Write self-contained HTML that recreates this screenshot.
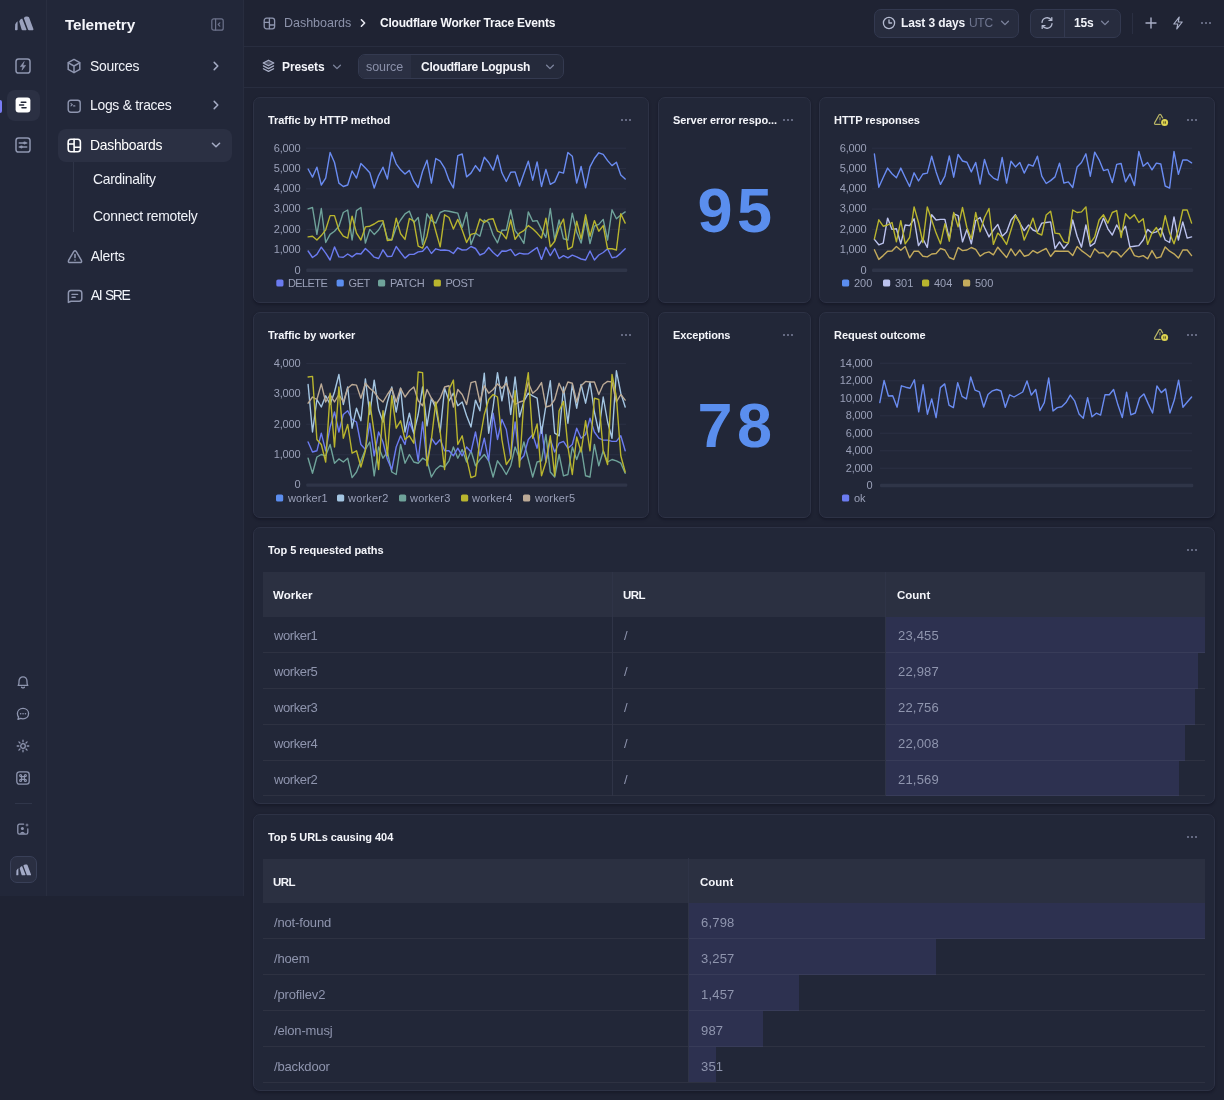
<!DOCTYPE html>
<html lang="en">
<head>
<meta charset="utf-8">
<title>Cloudflare Worker Trace Events</title>
<style>
*{box-sizing:border-box;margin:0;padding:0}
html,body{width:1224px;height:1100px;overflow:hidden}
body{background:#1f2333;font-family:"Liberation Sans",Arial,sans-serif;color:#ffffff;position:relative;-webkit-font-smoothing:antialiased}
#root{position:absolute;left:0;top:0;width:1224px;height:1100px;will-change:transform;transform:translateZ(0)}
.abs{position:absolute}
.sb{font-weight:700}
svg{display:block;overflow:visible}
.ico{position:absolute;fill:none;stroke:#8f96b0;stroke-width:1.5;stroke-linecap:round;stroke-linejoin:round}
/* rail + sidebar */
#rail{position:absolute;left:0;top:0;width:47px;height:896px;background:#222739;border-right:1px solid #292e40}
#side{position:absolute;left:47px;top:0;width:197px;height:896px;background:#222739;border-right:1px solid #282d3f}
.t{position:absolute;white-space:nowrap;line-height:1}
.nav{font-size:13.9px;color:#f1f3f9;letter-spacing:-.27px;margin-top:.8px}
/* top bars */
#top{position:absolute;left:244px;top:0;width:980px;height:47px;border-bottom:1px solid #282d3f}
#bar2{position:absolute;left:244px;top:47px;width:980px;height:41px;border-bottom:1px solid #282d3f}
.btn{position:absolute;background:#272c3e;border:1px solid #333950;border-radius:7px}
/* cards */
.card{position:absolute;background:#222738;border:1px solid #2d3245;border-radius:7px;box-shadow:0 1.5px 2.5px rgba(8,10,22,.32)}
.ct{position:absolute;font-size:11px;font-weight:700;color:#f4f5fa;white-space:nowrap;line-height:1;letter-spacing:-.05px;margin-top:1px}
.dots{position:absolute;width:10px;height:2px}
.dots i{position:absolute;top:-.1px;width:2.2px;height:2.2px;background:#7b819a;border-radius:50%}
.dots i:nth-child(1){left:1px}.dots i:nth-child(2){left:5.1px}.dots i:nth-child(3){left:9.2px}
.big{position:absolute;font-size:63px;font-weight:700;color:#5a8eee;line-height:1;white-space:nowrap;letter-spacing:4.5px}
.chart{position:absolute}
.tick{letter-spacing:-.15px;font-size:11px;fill:#9aa0b8;font-family:"Liberation Sans",Arial,sans-serif}
.leg{font-size:11px;fill:#9aa0b8;font-family:"Liberation Sans",Arial,sans-serif}
/* tables */
.th{position:absolute;background:#2b3041}
.thl{position:absolute;font-size:11.5px;font-weight:700;color:#f4f5fa;line-height:1;white-space:nowrap;letter-spacing:0;margin-top:.6px}
.td{position:absolute;font-size:13px;color:#8f95ae;line-height:1;white-space:nowrap;letter-spacing:-.15px;margin-top:-.3px}
.num{letter-spacing:.2px}
.wk{letter-spacing:-.4px}
.hl{position:absolute;height:1px;background:rgba(255,255,255,.055)}
.vl{position:absolute;width:1px;background:#2f3447}
.cbar{position:absolute;background:#2d3150}
</style>
</head>
<body>
<div id="root">

<!-- ============ ICON RAIL ============ -->
<div id="rail"></div>
<div id="side"></div>

<!-- rail: logo -->
<svg class="abs" style="left:13.5px;top:15.8px" width="20" height="15" viewBox="0 0 20 15">
  <g fill="#9aa1bd">
    <path d="M1.2 8.2 Q2.6 5.6 3.6 5.2 L3.6 13.4 Q3.6 14.2 2.8 14.2 L1.6 14.2 Q0.9 14.2 1 13.4 Z"/>
    <path d="M5.2 5.2 Q6.4 2.6 8.2 2.4 L12.4 13.2 Q12.8 14.2 11.8 14.2 L8.6 14.2 Q7.9 14.2 7.6 13.5 Z"/>
    <path d="M9.8 2 Q11 0.4 13 0.6 L14 0.7 Q14.8 0.8 15.1 1.6 L19.4 13.1 Q19.8 14.2 18.7 14.2 L15 14.2 Q14.3 14.2 14 13.5 Z"/>
  </g>
</svg>

<!-- rail: bolt in square -->
<svg class="ico" style="left:15px;top:58px" width="16" height="16" viewBox="0 0 16 16">
  <rect x="1" y="1" width="14" height="14" rx="2.6"/>
  <path d="M9 3.8 L5.4 8.6 H8 L7 12.2 L10.6 7.4 H8 Z" fill="#8f96b0" stroke-width="0.6"/>
</svg>

<!-- rail: active -->
<div class="abs" style="left:0;top:99.5px;width:2px;height:13px;background:#7a7cf5;border-radius:0 2px 2px 0"></div>
<div class="abs" style="left:7px;top:90px;width:33px;height:31px;background:#2b3043;border-radius:8px"></div>
<svg class="abs" style="left:15px;top:97px" width="16" height="16" viewBox="0 0 16 16">
  <rect x="0.6" y="0.6" width="14.8" height="14.8" rx="3" fill="#ffffff"/>
  <g stroke="#222739" stroke-width="1.6" stroke-linecap="round">
    <path d="M6.3 5.2 H10.8"/><path d="M4.6 8 H8.6"/><path d="M7 10.8 H11"/>
  </g>
</svg>

<!-- rail: sliders -->
<svg class="ico" style="left:15px;top:137px" width="16" height="16" viewBox="0 0 16 16">
  <rect x="1" y="1" width="14" height="14" rx="2.6"/>
  <path d="M4.2 6 H11.8 M4.2 10 H11.8" stroke-width="1.3"/>
  <circle cx="9.6" cy="6" r="1.4" fill="#8f96b0" stroke="none"/>
  <circle cx="6.4" cy="10" r="1.4" fill="#8f96b0" stroke="none"/>
</svg>

<!-- rail bottom: bell -->
<svg class="ico" style="left:16px;top:675px;stroke-width:1.3" width="14" height="15" viewBox="0 0 14 15">
  <path d="M2.2 10.4 C3.2 9.2 3 7.8 3 6.2 C3 3.6 4.8 1.8 7 1.8 C9.2 1.8 11 3.6 11 6.2 C11 7.8 10.8 9.2 11.8 10.4 Z"/>
  <path d="M5.6 12.2 Q7 13.6 8.4 12.2"/>
</svg>
<!-- chat -->
<svg class="ico" style="left:16px;top:707px;stroke-width:1.3" width="14" height="14" viewBox="0 0 14 14">
  <path d="M7 1.4 C10.2 1.4 12.6 3.6 12.6 6.6 C12.6 9.6 10.2 11.8 7 11.8 C6.2 11.8 5.4 11.7 4.7 11.4 L2 12.4 L2.6 10 C1.8 9.1 1.4 7.9 1.4 6.6 C1.4 3.6 3.8 1.4 7 1.4 Z"/>
  <path d="M4.6 6.7 H4.7 M7 6.7 H7.1 M9.4 6.7 H9.5" stroke-width="1.5"/>
</svg>
<!-- sun -->
<svg class="ico" style="left:16px;top:739px;stroke-width:1.3" width="14" height="14" viewBox="0 0 14 14">
  <circle cx="7" cy="7" r="2.3"/>
  <path d="M7 1.2 V2.8 M7 11.2 V12.8 M1.2 7 H2.8 M11.2 7 H12.8 M2.9 2.9 L4 4 M10 10 L11.1 11.1 M2.9 11.1 L4 10 M10 4 L11.1 2.9"/>
</svg>
<!-- cmd -->
<svg class="ico" style="left:16px;top:771px;stroke-width:1.3" width="14" height="14" viewBox="0 0 14 14">
  <rect x="0.8" y="0.8" width="12.4" height="12.4" rx="2.6"/>
  <path d="M5.6 5.6 H8.4 V8.4 H5.6 Z M5.6 5.6 H4.6 A1 1 0 1 1 5.6 4.6 Z M8.4 5.6 V4.6 A1 1 0 1 1 9.4 5.6 Z M8.4 8.4 H9.4 A1 1 0 1 1 8.4 9.4 Z M5.6 8.4 V9.4 A1 1 0 1 1 4.6 8.4 Z" stroke-width="1.1"/>
</svg>
<div class="abs" style="left:15px;top:803px;width:17px;height:1px;background:#30364a"></div>
<!-- user image -->
<svg class="ico" style="left:16px;top:822px;stroke-width:1.3" width="14" height="14" viewBox="0 0 14 14">
  <path d="M7.6 2.2 H3.4 A1.6 1.6 0 0 0 1.8 3.8 V10.6 A1.6 1.6 0 0 0 3.4 12.2 H10.2 A1.6 1.6 0 0 0 11.8 10.6 V6.8"/>
  <circle cx="6.4" cy="6.6" r="1.5" fill="#8f96b0" stroke="none"/>
  <path d="M3.6 11.8 Q6.4 7.6 9.4 11.8 Z" fill="#8f96b0" stroke="none"/>
  <path d="M11 1 L11.5 2.5 L13 3 L11.5 3.5 L11 5 L10.5 3.5 L9 3 L10.5 2.5 Z" fill="#8f96b0" stroke="none"/>
</svg>
<!-- logo button -->
<div class="abs" style="left:10px;top:856px;width:27px;height:27px;background:#2a2f42;border:1px solid #394058;border-radius:7px"></div>
<svg class="abs" style="left:15px;top:864px" width="17" height="12" viewBox="0 0 20 15">
  <g fill="#a3aac6">
    <path d="M1.2 8.2 Q2.6 5.6 3.6 5.2 L3.6 13.4 Q3.6 14.2 2.8 14.2 L1.6 14.2 Q0.9 14.2 1 13.4 Z"/>
    <path d="M5.2 5.2 Q6.4 2.6 8.2 2.4 L12.4 13.2 Q12.8 14.2 11.8 14.2 L8.6 14.2 Q7.9 14.2 7.6 13.5 Z"/>
    <path d="M9.8 2 Q11 0.4 13 0.6 L14 0.7 Q14.8 0.8 15.1 1.6 L19.4 13.1 Q19.8 14.2 18.7 14.2 L15 14.2 Q14.3 14.2 14 13.5 Z"/>
  </g>
</svg>

<!-- ============ SIDEBAR ============ -->
<div class="t" style="left:65px;top:16.5px;font-size:15.3px;font-weight:700;color:#f4f5fa;letter-spacing:-.12px">Telemetry</div>
<svg class="ico" style="left:210.5px;top:17.6px;stroke-width:1.2;stroke:#6d738c" width="13" height="13" viewBox="0 0 13 13">
  <rect x="0.8" y="0.8" width="11.4" height="11.4" rx="2"/>
  <path d="M4.6 1 V12"/><path d="M8.8 4.8 L7.2 6.5 L8.8 8.2"/>
</svg>

<!-- Sources -->
<svg class="ico" style="left:66px;top:58px" width="16" height="16" viewBox="0 0 16 16">
  <path d="M8 1.4 L13.8 4.6 V11.4 L8 14.6 L2.2 11.4 V4.6 Z"/>
  <path d="M2.4 4.8 L8 8 L13.6 4.8 M8 8 V14.4"/>
</svg>
<div class="t nav" style="left:90px;top:59px">Sources</div>
<svg class="ico" style="left:212px;top:61px;stroke:#a4abc4" width="8" height="10" viewBox="0 0 8 10"><path d="M2.2 1.4 L5.8 5 L2.2 8.6"/></svg>

<!-- Logs & traces -->
<svg class="ico" style="left:67.3px;top:98.5px;stroke-width:1.4" width="14.4" height="14.4" viewBox="0 0 14.4 14.4">
  <rect x="1.2" y="1.2" width="12" height="12" rx="2.6"/>
  <path d="M4 4.6 L5.3 5.7 L4 6.8 M6.6 6.9 H7.9" stroke-width="1.1"/>
</svg>
<div class="t nav" style="left:90px;top:98px">Logs &amp; traces</div>
<svg class="ico" style="left:212px;top:100px;stroke:#a4abc4" width="8" height="10" viewBox="0 0 8 10"><path d="M2.2 1.4 L5.8 5 L2.2 8.6"/></svg>

<!-- Dashboards (active) -->
<div class="abs" style="left:58px;top:129px;width:174px;height:33px;background:#2b3043;border-radius:8px"></div>
<svg class="ico" style="left:67.2px;top:137.5px;stroke:#ffffff;stroke-width:1.6" width="14.6" height="14.8" viewBox="0 0 14.6 14.8">
  <rect x="1.2" y="1.2" width="12.2" height="12.6" rx="2.7"/>
  <path d="M7.1 1.4 V13.6 M1.4 6 H7.1 M7.1 9.2 H13.2"/>
</svg>
<div class="t nav" style="left:90px;top:138px;color:#fff">Dashboards</div>
<svg class="ico" style="left:211px;top:141px;stroke:#a4abc4" width="10" height="8" viewBox="0 0 10 8"><path d="M1.4 2.2 L5 5.8 L8.6 2.2"/></svg>

<div class="abs" style="left:73px;top:162px;width:1px;height:70px;background:#2f3548"></div>
<div class="t nav" style="left:93px;top:172px">Cardinality</div>
<div class="t nav" style="left:93px;top:209px">Connect remotely</div>

<!-- Alerts -->
<svg class="ico" style="left:66.7px;top:248.6px" width="16" height="16" viewBox="0 0 16 16">
  <path d="M6.7 2.6 Q8 0.8 9.3 2.6 L14.4 11.4 Q15.2 13.6 13 13.6 H3 Q0.8 13.6 1.6 11.4 Z"/>
  <path d="M8 5.6 V8.6 M8 11 V11.1" stroke-width="1.6"/>
</svg>
<div class="t nav" style="left:90.8px;top:249px">Alerts</div>

<!-- AI SRE -->
<svg class="ico" style="left:66.7px;top:288.6px" width="16" height="15" viewBox="0 0 16 15">
  <path d="M3.8 1.4 H12.2 A2.6 2.6 0 0 1 14.8 4 V9.6 A2.6 2.6 0 0 1 12.2 12.2 H4 L1.4 13.4 V4 A2.6 2.6 0 0 1 3.8 1.4 Z"/>
  <path d="M5 5.4 H10.6 M5 8.2 H8.2" stroke-width="1.4"/>
</svg>
<div class="t nav" style="left:90.8px;top:288px;letter-spacing:-1.4px;word-spacing:1.3px">AI SRE</div>

<!-- ============ TOP BAR ============ -->
<div id="top"></div>
<svg class="ico" style="left:263.4px;top:17.3px;stroke-width:1.3" width="13" height="13" viewBox="0 0 13 13">
  <rect x="1.2" y="1.2" width="10.4" height="10.6" rx="2.3"/>
  <path d="M6.4 1.4 V11.6 M1.4 5.4 H6.4 M6.4 8 H11.4"/>
</svg>
<div class="t" style="left:284px;top:17px;font-size:12.5px;color:#8d93ab;letter-spacing:-.02px">Dashboards</div>
<svg class="ico" style="left:359px;top:18px;stroke:#e7e9f2;stroke-width:1.6" width="8" height="10" viewBox="0 0 8 10"><path d="M2.4 1.8 L5.6 5 L2.4 8.2"/></svg>
<div class="t sb" style="left:380px;top:16px;font-size:12px;color:#f6f7fb;letter-spacing:-.2px;margin-top:.9px">Cloudflare Worker Trace Events</div>

<div class="btn" style="left:874px;top:9px;width:145px;height:29px"></div>
<svg class="ico" style="left:882px;top:16px;stroke-width:1.3;stroke:#b4bad0" width="14" height="14" viewBox="0 0 14 14">
  <circle cx="7" cy="7" r="5.6"/><path d="M7 3.8 V7 H9.6"/>
</svg>
<div class="t sb" style="left:901px;top:16px;font-size:12px;color:#f1f3f9;letter-spacing:-.12px;margin-top:.6px">Last 3 days</div>
<div class="t" style="left:969px;top:17px;font-size:12px;color:#6f7690;letter-spacing:-.3px">UTC</div>
<svg class="ico" style="left:1000px;top:19px;stroke:#7c839c;stroke-width:1.3" width="10" height="8" viewBox="0 0 10 8"><path d="M1.6 2.2 L5 5.6 L8.4 2.2"/></svg>

<div class="btn" style="left:1030px;top:9px;width:91px;height:29px"></div>
<div class="abs" style="left:1064px;top:10px;width:1px;height:27px;background:#333950"></div>
<svg class="ico" style="left:1040px;top:16px;stroke-width:1.3;stroke:#b4bad0" width="14" height="14" viewBox="0 0 14 14">
  <path d="M2 6.4 A5.1 5.1 0 0 1 11.4 4.2 M12 7.6 A5.1 5.1 0 0 1 2.6 9.8"/>
  <path d="M11.8 1.6 V4.4 H9 M2.2 12.4 V9.6 H5"/>
</svg>
<div class="t sb" style="left:1074px;top:16px;font-size:12px;color:#f1f3f9;letter-spacing:-.2px;margin-top:1.2px">15s</div>
<svg class="ico" style="left:1100px;top:19px;stroke:#7c839c;stroke-width:1.3" width="10" height="8" viewBox="0 0 10 8"><path d="M1.6 2.2 L5 5.6 L8.4 2.2"/></svg>

<div class="abs" style="left:1132px;top:13px;width:1px;height:21px;background:#2a2f42"></div>
<svg class="ico" style="left:1145px;top:17px;stroke:#aab0c8;stroke-width:1.4" width="12" height="12" viewBox="0 0 12 12"><path d="M6 1 V11 M1 6 H11"/></svg>
<svg class="ico" style="left:1172px;top:16px;stroke:#aab0c8;stroke-width:1.2" width="12" height="14" viewBox="0 0 12 14"><path d="M7.2 1.2 L1.8 8 H5.8 L4.8 12.8 L10.2 6 H6.2 Z"/></svg>
<div class="dots" style="left:1200px;top:22px"><i></i><i></i><i></i></div>

<!-- ============ PRESETS BAR ============ -->
<div id="bar2"></div>
<svg class="ico" style="left:262px;top:59px;stroke-width:1.2;stroke:#aab0c8" width="13" height="14" viewBox="0 0 13 14">
  <path d="M6.5 1.2 L11.8 4 L6.5 6.8 L1.2 4 Z" fill="#aab0c8" fill-opacity=".35"/>
  <path d="M1.4 6.9 L6.5 9.6 L11.6 6.9 M1.4 9.7 L6.5 12.4 L11.6 9.7"/>
</svg>
<div class="t sb" style="left:282px;top:59px;font-size:12px;color:#f4f5fa;letter-spacing:-.12px;margin-top:1.7px">Presets</div>
<svg class="ico" style="left:332px;top:63px;stroke:#7c839c;stroke-width:1.3" width="10" height="8" viewBox="0 0 10 8"><path d="M1.6 2.2 L5 5.6 L8.4 2.2"/></svg>

<div class="btn" style="left:358px;top:54px;width:206px;height:25px;background:#252a3b;border-color:#343a50"></div>
<div class="abs" style="left:359px;top:55px;width:52px;height:23px;background:#2b3043;border-radius:6px 0 0 6px"></div>
<div class="t" style="left:366px;top:61px;font-size:12.5px;color:#8a90a9;letter-spacing:-.05px">source</div>
<div class="t sb" style="left:421px;top:60px;font-size:12px;color:#f4f5fa;letter-spacing:-.23px;margin-top:.6px">Cloudflare Logpush</div>
<svg class="ico" style="left:545px;top:63px;stroke:#7c839c;stroke-width:1.3" width="10" height="8" viewBox="0 0 10 8"><path d="M1.6 2.2 L5 5.6 L8.4 2.2"/></svg>

<!-- ============ CARDS ROW 1 ============ -->
<div class="card" style="left:253px;top:97px;width:396px;height:206px"></div>
<div class="ct" style="left:268px;top:114px">Traffic by HTTP method</div>
<div class="dots" style="left:619.6px;top:119px"><i></i><i></i><i></i></div>
<svg class="chart" style="left:253px;top:130px" width="395" height="170" viewBox="253 130 395 170">
<rect x="306.2" y="147.60" width="319.8" height="1.2" fill="#2a2f42"/>
<rect x="306.2" y="167.90" width="319.8" height="1.2" fill="#2a2f42"/>
<rect x="306.2" y="188.20" width="319.8" height="1.2" fill="#2a2f42"/>
<rect x="306.2" y="208.50" width="319.8" height="1.2" fill="#2a2f42"/>
<rect x="306.2" y="228.80" width="319.8" height="1.2" fill="#2a2f42"/>
<rect x="306.2" y="249.10" width="319.8" height="1.2" fill="#2a2f42"/>
<rect x="306.2" y="268.60" width="321.09999999999997" height="3.4" rx="1.2" fill="#2f3548"/>
<polyline points="308.1,208.8 312.5,207.5 316.9,234.4 321.3,208.5 325.7,242.5 330.1,234.4 334.5,231.2 338.9,226.2 343.3,212.5 347.7,210.0 352.1,240.0 356.5,210.6 360.9,207.5 365.4,243.1 369.8,229.4 374.2,234.4 378.6,230.0 383.0,222.5 387.4,238.8 391.8,240.0 396.2,227.5 400.6,220.0 405.0,213.8 409.4,211.2 413.8,222.5 418.2,217.5 422.6,244.4 427.0,213.8 431.4,220.6 435.8,223.1 440.2,212.5 444.6,210.6 449.0,211.2 453.4,212.2 457.8,213.1 462.2,227.5 466.6,212.5 471.0,244.4 475.5,233.1 479.9,236.2 484.3,220.0 488.7,222.5 493.1,235.0 497.5,242.8 501.9,230.2 506.3,230.0 510.7,210.0 515.1,230.6 519.5,236.2 523.9,243.5 528.3,211.9 532.7,221.2 537.1,220.6 541.5,229.4 545.9,237.5 550.3,208.5 554.7,240.0 559.1,220.0 563.5,238.8 567.9,240.0 572.3,213.1 576.7,231.9 581.1,243.1 585.6,220.0 590.0,243.5 594.4,226.2 598.8,224.4 603.2,219.4 607.6,240.0 612.0,209.8 616.4,218.8 620.8,215.0 625.2,211.9" fill="none" stroke="#6fa39a" stroke-width="1.4" stroke-linejoin="round" stroke-linecap="round"/>
<polyline points="308.1,251.0 312.5,257.5 316.9,254.4 321.3,247.2 325.7,253.1 330.1,260.0 334.5,246.9 338.9,256.9 343.3,257.2 347.7,254.0 352.1,256.9 356.5,253.5 360.9,254.0 365.4,248.5 369.8,252.5 374.2,257.2 378.6,258.5 383.0,249.8 387.4,256.5 391.8,256.2 396.2,246.5 400.6,252.5 405.0,258.1 409.4,254.4 413.8,254.4 418.2,251.9 422.6,251.2 427.0,246.5 431.4,253.5 435.8,248.8 440.2,250.2 444.6,250.0 449.0,250.6 453.4,253.5 457.8,247.8 462.2,250.0 466.6,249.8 471.0,246.5 475.5,248.5 479.9,255.0 484.3,253.1 488.7,247.5 493.1,252.5 497.5,256.2 501.9,251.0 506.3,251.2 510.7,249.4 515.1,255.6 519.5,253.1 523.9,254.0 528.3,253.8 532.7,250.6 537.1,247.5 541.5,259.4 545.9,247.2 550.3,255.6 554.7,248.5 559.1,258.5 563.5,255.6 567.9,257.8 572.3,255.2 576.7,256.9 581.1,259.0 585.6,260.0 590.0,251.0 594.4,260.0 598.8,255.0 603.2,252.5 607.6,248.8 612.0,257.8 616.4,256.9 620.8,253.1 625.2,248.8" fill="none" stroke="#6b7bf0" stroke-width="1.4" stroke-linejoin="round" stroke-linecap="round"/>
<polyline points="308.1,169.0 312.5,177.1 316.9,167.2 321.3,185.0 325.7,178.1 330.1,152.5 334.5,162.5 338.9,183.1 343.3,186.5 347.7,185.0 352.1,171.0 356.5,178.1 360.9,163.5 365.4,168.1 369.8,172.8 374.2,188.1 378.6,175.6 383.0,167.2 387.4,179.0 391.8,152.2 396.2,163.8 400.6,169.8 405.0,174.0 409.4,170.4 413.8,181.2 418.2,187.5 422.6,171.2 427.0,160.2 431.4,183.1 435.8,158.5 440.2,161.2 444.6,168.1 449.0,180.2 453.4,187.9 457.8,155.6 462.2,154.0 466.6,176.9 471.0,173.1 475.5,165.6 479.9,171.2 484.3,157.2 488.7,162.5 493.1,170.2 497.5,155.2 501.9,172.8 506.3,181.5 510.7,172.2 515.1,171.9 519.5,186.0 523.9,173.5 528.3,161.2 532.7,180.2 537.1,161.9 541.5,186.5 545.9,169.4 550.3,184.4 554.7,181.9 559.1,171.9 563.5,173.1 567.9,152.5 572.3,156.2 576.7,183.1 581.1,166.5 585.6,187.8 590.0,166.9 594.4,158.5 598.8,152.8 603.2,154.4 607.6,160.6 612.0,165.6 616.4,162.2 620.8,175.0 625.2,179.0" fill="none" stroke="#6a8cf2" stroke-width="1.4" stroke-linejoin="round" stroke-linecap="round"/>
<polyline points="308.1,236.9 312.5,236.2 316.9,240.0 321.3,235.6 325.7,229.8 330.1,215.6 334.5,215.6 338.9,230.0 343.3,236.2 347.7,238.1 352.1,216.2 356.5,233.1 360.9,240.0 365.4,226.9 369.8,226.2 374.2,224.0 378.6,221.2 383.0,220.6 387.4,240.6 391.8,239.8 396.2,218.1 400.6,233.8 405.0,239.4 409.4,218.5 413.8,221.2 418.2,246.2 422.6,248.1 427.0,236.2 431.4,214.8 435.8,231.2 440.2,246.9 444.6,214.8 449.0,217.5 453.4,229.0 457.8,219.4 462.2,230.0 466.6,242.5 471.0,234.4 475.5,233.1 479.9,219.0 484.3,222.5 488.7,219.4 493.1,218.8 497.5,231.2 501.9,233.1 506.3,238.8 510.7,220.0 515.1,239.4 519.5,233.1 523.9,230.6 528.3,225.6 532.7,228.8 537.1,233.1 541.5,238.1 545.9,218.1 550.3,246.9 554.7,241.2 559.1,227.5 563.5,219.0 567.9,249.4 572.3,246.9 576.7,221.2 581.1,238.8 585.6,214.8 590.0,236.2 594.4,220.6 598.8,231.2 603.2,225.6 607.6,248.8 612.0,248.8 616.4,250.0 620.8,213.8 625.2,223.1" fill="none" stroke="#b9b52e" stroke-width="1.4" stroke-linejoin="round" stroke-linecap="round"/>
<text x="300.5" y="151.5" text-anchor="end" class="tick">6,000</text>
<text x="300.5" y="171.8" text-anchor="end" class="tick">5,000</text>
<text x="300.5" y="192.1" text-anchor="end" class="tick">4,000</text>
<text x="300.5" y="212.4" text-anchor="end" class="tick">3,000</text>
<text x="300.5" y="232.7" text-anchor="end" class="tick">2,000</text>
<text x="300.5" y="253.0" text-anchor="end" class="tick">1,000</text>
<text x="300.5" y="273.6" text-anchor="end" class="tick">0</text>
<rect x="276.3" y="279.4" width="7.2" height="7.2" rx="1.7" fill="#6b7bf0"/>
<text x="288" y="286.7" class="leg" style="letter-spacing:-0.6px">DELETE</text>
<rect x="336.6" y="279.4" width="7.2" height="7.2" rx="1.7" fill="#5b8def"/>
<text x="348.6" y="286.7" class="leg" style="letter-spacing:-0.45px">GET</text>
<rect x="378" y="279.4" width="7.2" height="7.2" rx="1.7" fill="#6fa39a"/>
<text x="390" y="286.7" class="leg" style="letter-spacing:-0.25px">PATCH</text>
<rect x="433.7" y="279.4" width="7.2" height="7.2" rx="1.7" fill="#b9b52e"/>
<text x="445.4" y="286.7" class="leg" style="letter-spacing:-0.4px">POST</text>
</svg>

<div class="card" style="left:658px;top:97px;width:153px;height:206px"></div>
<div class="ct" style="left:673px;top:114px">Server error respo...</div>
<div class="dots" style="left:781.6px;top:119px"><i></i><i></i><i></i></div>
<div class="big" style="left:697.5px;top:179px">95</div>

<div class="card" style="left:819px;top:97px;width:396px;height:206px"></div>
<div class="ct" style="left:834px;top:114px">HTTP responses</div>
<svg class="abs warn" style="left:1152px;top:111px" width="18" height="17" viewBox="0 0 18 17">
  <path d="M7.1 3.9 Q8 2.5 8.9 3.9 L13.4 11.9 Q14 13.4 12.4 13.4 H3.6 Q2 13.4 2.6 11.9 Z" fill="none" stroke="#b9b566" stroke-width="1.15" stroke-linejoin="round"/>
  <path d="M8 6.6 V9 M8 10.9 V11" stroke="#b9b566" stroke-width="1" stroke-linecap="round"/>
  <circle cx="12.6" cy="11.5" r="4.5" fill="#222738"/>
  <circle cx="12.6" cy="11.5" r="3.5" fill="#ddd350"/>
  <path d="M11.8 10.3 V12.7 M13.4 10.3 V12.7" stroke="#4a4520" stroke-width="0.9"/>
</svg>
<div class="dots" style="left:1185.7px;top:119px"><i></i><i></i><i></i></div>
<svg class="chart" style="left:819px;top:130px" width="395" height="170" viewBox="819 130 395 170">
<rect x="872" y="147.60" width="320" height="1.2" fill="#2a2f42"/>
<rect x="872" y="167.90" width="320" height="1.2" fill="#2a2f42"/>
<rect x="872" y="188.20" width="320" height="1.2" fill="#2a2f42"/>
<rect x="872" y="208.50" width="320" height="1.2" fill="#2a2f42"/>
<rect x="872" y="228.80" width="320" height="1.2" fill="#2a2f42"/>
<rect x="872" y="249.10" width="320" height="1.2" fill="#2a2f42"/>
<rect x="872" y="268.60" width="321.29999999999995" height="3.4" rx="1.2" fill="#2f3548"/>
<polyline points="874.4,249.8 878.8,259.4 883.2,255.6 887.6,251.2 892.0,251.0 896.4,246.5 900.8,250.2 905.2,246.5 909.6,257.8 914.1,251.2 918.5,251.2 922.9,256.2 927.3,256.9 931.7,254.0 936.1,253.5 940.5,248.5 944.9,250.0 949.3,257.5 953.7,259.4 958.1,247.5 962.5,250.6 966.9,250.0 971.3,247.5 975.7,249.4 980.1,256.2 984.5,253.1 989.0,251.9 993.4,254.8 997.8,247.2 1002.2,252.5 1006.6,257.5 1011.0,248.8 1015.4,255.6 1019.8,250.0 1024.2,256.2 1028.6,255.0 1033.0,250.6 1037.4,253.1 1041.8,250.6 1046.2,248.5 1050.6,256.5 1055.0,251.0 1059.5,251.2 1063.9,251.2 1068.3,251.2 1072.7,255.6 1077.1,246.5 1081.5,250.6 1085.9,253.8 1090.3,257.2 1094.7,248.8 1099.1,253.1 1103.5,252.5 1107.9,256.9 1112.3,251.2 1116.7,252.2 1121.1,256.9 1125.5,251.9 1129.9,247.2 1134.4,255.6 1138.8,256.9 1143.2,255.6 1147.6,258.8 1152.0,250.6 1156.4,258.1 1160.8,256.9 1165.2,246.9 1169.6,251.2 1174.0,253.8 1178.4,258.1 1182.8,250.0 1187.2,250.0 1191.6,255.6" fill="none" stroke="#c4ab5c" stroke-width="1.4" stroke-linejoin="round" stroke-linecap="round"/>
<polyline points="874.4,239.4 878.8,244.8 883.2,243.1 887.6,218.1 892.0,229.4 896.4,228.8 900.8,243.8 905.2,225.0 909.6,225.6 914.1,218.8 918.5,245.6 922.9,238.8 927.3,247.5 931.7,214.8 936.1,220.0 940.5,219.4 944.9,219.4 949.3,238.8 953.7,213.8 958.1,215.6 962.5,241.9 966.9,229.4 971.3,243.8 975.7,220.6 980.1,217.5 984.5,227.5 989.0,236.9 993.4,230.0 997.8,224.4 1002.2,236.2 1006.6,231.9 1011.0,220.0 1015.4,214.8 1019.8,223.1 1024.2,230.6 1028.6,225.0 1033.0,230.0 1037.4,231.9 1041.8,223.1 1046.2,222.5 1050.6,221.9 1055.0,248.5 1059.5,241.9 1063.9,248.5 1068.3,243.1 1072.7,220.0 1077.1,236.2 1081.5,247.2 1085.9,225.0 1090.3,246.2 1094.7,243.1 1099.1,229.4 1103.5,218.1 1107.9,228.8 1112.3,235.0 1116.7,225.0 1121.1,232.5 1125.5,226.2 1129.9,246.9 1134.4,246.2 1138.8,245.6 1143.2,240.0 1147.6,229.4 1152.0,233.1 1156.4,231.9 1160.8,228.1 1165.2,240.0 1169.6,242.5 1174.0,216.9 1178.4,240.0 1182.8,221.9 1187.2,238.1 1191.6,236.9" fill="none" stroke="#bcc3ee" stroke-width="1.4" stroke-linejoin="round" stroke-linecap="round"/>
<polyline points="874.4,154.0 878.8,187.2 883.2,177.5 887.6,168.1 892.0,173.8 896.4,177.8 900.8,168.1 905.2,177.5 909.6,186.5 914.1,172.8 918.5,181.0 922.9,174.0 927.3,173.1 931.7,156.2 936.1,171.9 940.5,184.4 944.9,176.2 949.3,156.0 953.7,177.2 958.1,154.4 962.5,161.0 966.9,162.2 971.3,171.9 975.7,162.5 980.1,184.0 984.5,159.4 989.0,173.8 993.4,178.1 997.8,180.2 1002.2,157.5 1006.6,183.1 1011.0,161.2 1015.4,166.9 1019.8,162.5 1024.2,173.1 1028.6,164.4 1033.0,166.2 1037.4,156.2 1041.8,176.2 1046.2,183.5 1050.6,180.6 1055.0,176.9 1059.5,163.1 1063.9,183.1 1068.3,181.9 1072.7,187.5 1077.1,166.9 1081.5,162.5 1085.9,153.8 1090.3,176.2 1094.7,152.2 1099.1,159.8 1103.5,170.6 1107.9,169.4 1112.3,182.5 1116.7,164.4 1121.1,163.5 1125.5,181.9 1129.9,173.8 1134.4,185.6 1138.8,151.5 1143.2,166.2 1147.6,162.5 1152.0,169.8 1156.4,163.1 1160.8,164.0 1165.2,186.0 1169.6,188.1 1174.0,151.5 1178.4,174.4 1182.8,160.0 1187.2,160.0 1191.6,162.8" fill="none" stroke="#6a8cf2" stroke-width="1.4" stroke-linejoin="round" stroke-linecap="round"/>
<polyline points="874.4,238.8 878.8,219.8 883.2,226.2 887.6,225.0 892.0,222.5 896.4,241.9 900.8,220.6 905.2,243.8 909.6,237.5 914.1,206.9 918.5,222.5 922.9,242.5 927.3,206.9 931.7,220.0 936.1,233.1 940.5,243.8 944.9,223.8 949.3,241.2 953.7,212.5 958.1,226.9 962.5,207.5 966.9,227.5 971.3,238.8 975.7,212.5 980.1,231.9 984.5,217.5 989.0,208.5 993.4,244.4 997.8,233.1 1002.2,237.5 1006.6,244.4 1011.0,230.0 1015.4,215.6 1019.8,222.5 1024.2,240.0 1028.6,230.0 1033.0,218.1 1037.4,233.1 1041.8,235.0 1046.2,215.0 1050.6,211.2 1055.0,233.1 1059.5,233.8 1063.9,241.9 1068.3,243.1 1072.7,210.0 1077.1,212.5 1081.5,211.9 1085.9,206.9 1090.3,243.1 1094.7,236.9 1099.1,220.0 1103.5,214.8 1107.9,223.1 1112.3,212.5 1116.7,210.6 1121.1,237.5 1125.5,213.8 1129.9,218.8 1134.4,214.8 1138.8,222.5 1143.2,218.8 1147.6,244.4 1152.0,233.1 1156.4,227.5 1160.8,236.9 1165.2,215.6 1169.6,233.1 1174.0,243.8 1178.4,230.0 1182.8,210.0 1187.2,210.0 1191.6,223.1" fill="none" stroke="#b9b52e" stroke-width="1.4" stroke-linejoin="round" stroke-linecap="round"/>
<text x="866.5" y="151.5" text-anchor="end" class="tick">6,000</text>
<text x="866.5" y="171.8" text-anchor="end" class="tick">5,000</text>
<text x="866.5" y="192.1" text-anchor="end" class="tick">4,000</text>
<text x="866.5" y="212.4" text-anchor="end" class="tick">3,000</text>
<text x="866.5" y="232.7" text-anchor="end" class="tick">2,000</text>
<text x="866.5" y="253.0" text-anchor="end" class="tick">1,000</text>
<text x="866.5" y="273.6" text-anchor="end" class="tick">0</text>
<rect x="842" y="279.4" width="7.2" height="7.2" rx="1.7" fill="#5b8def"/>
<text x="854" y="286.7" class="leg" style="letter-spacing:0px">200</text>
<rect x="883" y="279.4" width="7.2" height="7.2" rx="1.7" fill="#bcc3ee"/>
<text x="895" y="286.7" class="leg" style="letter-spacing:0px">301</text>
<rect x="922" y="279.4" width="7.2" height="7.2" rx="1.7" fill="#b9b52e"/>
<text x="934" y="286.7" class="leg" style="letter-spacing:0px">404</text>
<rect x="963" y="279.4" width="7.2" height="7.2" rx="1.7" fill="#c4ab5c"/>
<text x="975" y="286.7" class="leg" style="letter-spacing:0px">500</text>
</svg>

<!-- ============ CARDS ROW 2 ============ -->
<div class="card" style="left:253px;top:312px;width:396px;height:206px"></div>
<div class="ct" style="left:268px;top:329px">Traffic by worker</div>
<div class="dots" style="left:619.6px;top:334px"><i></i><i></i><i></i></div>
<svg class="chart" style="left:253px;top:345px" width="395" height="170" viewBox="253 345 395 170">
<rect x="306.2" y="362.90" width="319.8" height="1.2" fill="#2a2f42"/>
<rect x="306.2" y="393.30" width="319.8" height="1.2" fill="#2a2f42"/>
<rect x="306.2" y="423.70" width="319.8" height="1.2" fill="#2a2f42"/>
<rect x="306.2" y="454.10" width="319.8" height="1.2" fill="#2a2f42"/>
<rect x="306.2" y="483.40" width="321.09999999999997" height="3.4" rx="1.2" fill="#2f3548"/>
<polyline points="308.1,458.2 312.5,473.2 316.9,457.0 321.3,454.5 325.7,455.8 330.1,444.5 334.5,463.2 338.9,458.9 343.3,462.0 347.7,458.2 352.1,477.6 356.5,472.0 360.9,460.8 365.4,449.5 369.8,442.0 374.2,475.8 378.6,447.0 383.0,458.2 387.4,452.0 391.8,472.0 396.2,474.5 400.6,444.5 405.0,463.2 409.4,454.5 413.8,462.0 418.2,463.2 422.6,458.2 427.0,460.8 431.4,477.0 435.8,469.5 440.2,465.8 444.6,467.0 449.0,460.8 453.4,447.0 457.8,458.2 462.2,449.5 466.6,462.0 471.0,450.8 475.5,465.8 479.9,459.5 484.3,454.5 488.7,460.8 493.1,477.0 497.5,460.8 501.9,467.0 506.3,474.5 510.7,465.8 515.1,447.0 519.5,458.2 523.9,442.0 528.3,459.5 532.7,477.0 537.1,462.0 541.5,460.8 545.9,434.5 550.3,472.0 554.7,477.0 559.1,454.5 563.5,475.8 567.9,474.5 572.3,447.0 576.7,459.5 581.1,447.0 585.6,475.8 590.0,477.0 594.4,444.5 598.8,465.8 603.2,450.8 607.6,462.0 612.0,459.5 616.4,460.8 620.8,463.2 625.2,473.2" fill="none" stroke="#6fa39a" stroke-width="1.4" stroke-linejoin="round" stroke-linecap="round"/>
<polyline points="308.1,442.0 312.5,452.0 316.9,450.8 321.3,433.2 325.7,450.8 330.1,427.0 334.5,412.0 338.9,432.0 343.3,414.5 347.7,410.8 352.1,419.5 356.5,422.0 360.9,444.5 365.4,449.5 369.8,423.2 374.2,455.8 378.6,432.0 383.0,442.0 387.4,459.5 391.8,469.5 396.2,447.0 400.6,435.8 405.0,444.5 409.4,422.0 413.8,433.2 418.2,460.8 422.6,422.0 427.0,462.0 431.4,438.2 435.8,444.5 440.2,439.5 444.6,450.8 449.0,450.8 453.4,455.8 457.8,448.2 462.2,455.8 466.6,447.0 471.0,452.0 475.5,432.0 479.9,455.8 484.3,438.2 488.7,460.8 493.1,413.2 497.5,439.5 501.9,419.5 506.3,429.5 510.7,457.0 515.1,422.0 519.5,460.8 523.9,455.8 528.3,439.5 532.7,434.5 537.1,448.2 541.5,427.0 545.9,462.0 550.3,439.5 554.7,452.0 559.1,443.2 563.5,441.4 567.9,448.2 572.3,444.5 576.7,428.2 581.1,438.2 585.6,434.5 590.0,418.2 594.4,432.0 598.8,438.2 603.2,440.1 607.6,440.1 612.0,441.4 616.4,441.4 620.8,435.8 625.2,450.8" fill="none" stroke="#6b7bf0" stroke-width="1.4" stroke-linejoin="round" stroke-linecap="round"/>
<polyline points="308.1,384.5 312.5,432.0 316.9,399.5 321.3,407.0 325.7,395.8 330.1,404.5 334.5,392.0 338.9,374.5 343.3,404.5 347.7,387.0 352.1,428.2 356.5,408.2 360.9,420.8 365.4,378.9 369.8,414.5 374.2,380.1 378.6,409.5 383.0,422.0 387.4,402.0 391.8,387.0 396.2,412.0 400.6,388.2 405.0,432.0 409.4,413.2 413.8,433.2 418.2,414.5 422.6,387.0 427.0,425.8 431.4,398.2 435.8,408.2 440.2,432.0 444.6,388.2 449.0,400.8 453.4,393.2 457.8,405.8 462.2,402.0 466.6,415.8 471.0,427.0 475.5,400.1 479.9,410.8 484.3,373.2 488.7,433.2 493.1,407.0 497.5,372.6 501.9,400.8 506.3,377.0 510.7,414.5 515.1,377.0 519.5,417.0 523.9,401.4 528.3,393.2 532.7,395.8 537.1,398.2 541.5,433.2 545.9,405.8 550.3,380.8 554.7,433.2 559.1,435.8 563.5,387.0 567.9,423.2 572.3,384.5 576.7,408.2 581.1,384.5 585.6,403.2 590.0,382.0 594.4,412.0 598.8,432.0 603.2,397.0 607.6,422.0 612.0,438.2 616.4,370.8 620.8,393.2 625.2,407.0" fill="none" stroke="#a4c6e2" stroke-width="1.4" stroke-linejoin="round" stroke-linecap="round"/>
<polyline points="308.1,403.2 312.5,397.0 316.9,399.5 321.3,383.9 325.7,402.0 330.1,394.5 334.5,402.0 338.9,394.5 343.3,402.0 347.7,388.2 352.1,384.5 356.5,385.1 360.9,398.2 365.4,383.2 369.8,388.2 374.2,392.0 378.6,398.2 383.0,402.0 387.4,394.5 391.8,388.2 396.2,402.0 400.6,388.2 405.0,397.0 409.4,390.8 413.8,387.0 418.2,400.8 422.6,405.8 427.0,389.5 431.4,398.2 435.8,404.5 440.2,398.2 444.6,387.0 449.0,385.8 453.4,407.0 457.8,389.5 462.2,394.5 466.6,404.5 471.0,382.6 475.5,381.4 479.9,402.0 484.3,385.8 488.7,393.2 493.1,389.5 497.5,383.9 501.9,388.2 506.3,383.2 510.7,395.1 515.1,404.5 519.5,402.0 523.9,400.8 528.3,382.6 532.7,393.2 537.1,389.5 541.5,382.6 545.9,407.0 550.3,405.8 554.7,399.5 559.1,383.2 563.5,393.2 567.9,382.0 572.3,383.2 576.7,402.0 581.1,385.8 585.6,381.4 590.0,382.0 594.4,382.0 598.8,394.5 603.2,384.5 607.6,381.4 612.0,382.0 616.4,402.0 620.8,394.5 625.2,400.1" fill="none" stroke="#bcaa96" stroke-width="1.4" stroke-linejoin="round" stroke-linecap="round"/>
<polyline points="308.1,377.0 312.5,376.4 316.9,439.5 321.3,444.5 325.7,462.0 330.1,393.2 334.5,447.0 338.9,387.0 343.3,438.2 347.7,424.5 352.1,453.2 356.5,450.8 360.9,467.0 365.4,450.8 369.8,402.0 374.2,433.2 378.6,469.5 383.0,410.8 387.4,455.8 391.8,395.8 396.2,428.2 400.6,420.8 405.0,439.5 409.4,435.8 413.8,443.2 418.2,372.0 422.6,372.6 427.0,465.8 431.4,439.5 435.8,402.0 440.2,432.0 444.6,469.5 449.0,389.5 453.4,380.1 457.8,444.5 462.2,435.8 466.6,458.2 471.0,477.6 475.5,475.8 479.9,439.5 484.3,414.5 488.7,399.5 493.1,394.5 497.5,397.0 501.9,439.5 506.3,464.5 510.7,458.2 515.1,390.8 519.5,467.0 523.9,399.5 528.3,372.6 532.7,438.2 537.1,423.9 541.5,475.8 545.9,462.0 550.3,435.8 554.7,475.8 559.1,410.8 563.5,401.4 567.9,447.0 572.3,474.5 576.7,437.0 581.1,452.0 585.6,420.8 590.0,450.8 594.4,398.2 598.8,399.5 603.2,450.8 607.6,464.5 612.0,374.5 616.4,397.0 620.8,455.8 625.2,472.0" fill="none" stroke="#b9b52e" stroke-width="1.4" stroke-linejoin="round" stroke-linecap="round"/>
<text x="300.5" y="366.8" text-anchor="end" class="tick">4,000</text>
<text x="300.5" y="397.2" text-anchor="end" class="tick">3,000</text>
<text x="300.5" y="427.6" text-anchor="end" class="tick">2,000</text>
<text x="300.5" y="458.0" text-anchor="end" class="tick">1,000</text>
<text x="300.5" y="488.4" text-anchor="end" class="tick">0</text>
<rect x="276" y="494.4" width="7.2" height="7.2" rx="1.7" fill="#5b8def"/>
<text x="288" y="501.7" class="leg" style="letter-spacing:0.1px">worker1</text>
<rect x="337" y="494.4" width="7.2" height="7.2" rx="1.7" fill="#a4c6e2"/>
<text x="348" y="501.7" class="leg" style="letter-spacing:0.2px">worker2</text>
<rect x="399" y="494.4" width="7.2" height="7.2" rx="1.7" fill="#6fa39a"/>
<text x="410" y="501.7" class="leg" style="letter-spacing:0.2px">worker3</text>
<rect x="461" y="494.4" width="7.2" height="7.2" rx="1.7" fill="#b9b52e"/>
<text x="472" y="501.7" class="leg" style="letter-spacing:0.2px">worker4</text>
<rect x="523" y="494.4" width="7.2" height="7.2" rx="1.7" fill="#bcaa96"/>
<text x="535" y="501.7" class="leg" style="letter-spacing:0.15px">worker5</text>
</svg>

<div class="card" style="left:658px;top:312px;width:153px;height:206px"></div>
<div class="ct" style="left:673px;top:329px;letter-spacing:-.14px">Exceptions</div>
<div class="dots" style="left:781.6px;top:334px"><i></i><i></i><i></i></div>
<div class="big" style="left:697.5px;top:394px">78</div>

<div class="card" style="left:819px;top:312px;width:396px;height:206px"></div>
<div class="ct" style="left:834px;top:329px">Request outcome</div>
<svg class="abs warn" style="left:1152px;top:326px" width="18" height="17" viewBox="0 0 18 17">
  <path d="M7.1 3.9 Q8 2.5 8.9 3.9 L13.4 11.9 Q14 13.4 12.4 13.4 H3.6 Q2 13.4 2.6 11.9 Z" fill="none" stroke="#b9b566" stroke-width="1.15" stroke-linejoin="round"/>
  <path d="M8 6.6 V9 M8 10.9 V11" stroke="#b9b566" stroke-width="1" stroke-linecap="round"/>
  <circle cx="12.6" cy="11.5" r="4.5" fill="#222738"/>
  <circle cx="12.6" cy="11.5" r="3.5" fill="#ddd350"/>
  <path d="M11.8 10.3 V12.7 M13.4 10.3 V12.7" stroke="#4a4520" stroke-width="0.9"/>
</svg>
<div class="dots" style="left:1185.7px;top:334px"><i></i><i></i><i></i></div>
<svg class="chart" style="left:819px;top:345px" width="395" height="170" viewBox="819 345 395 170">
<rect x="880" y="362.65" width="312" height="1.2" fill="#2a2f42"/>
<rect x="880" y="380.15" width="312" height="1.2" fill="#2a2f42"/>
<rect x="880" y="397.65" width="312" height="1.2" fill="#2a2f42"/>
<rect x="880" y="415.15" width="312" height="1.2" fill="#2a2f42"/>
<rect x="880" y="432.65" width="312" height="1.2" fill="#2a2f42"/>
<rect x="880" y="450.15" width="312" height="1.2" fill="#2a2f42"/>
<rect x="880" y="467.65" width="312" height="1.2" fill="#2a2f42"/>
<rect x="880" y="483.80" width="313.29999999999995" height="3.4" rx="1.2" fill="#2f3548"/>
<polyline points="879.8,402.6 884.1,380.5 888.4,396.0 892.7,395.8 897.1,407.2 901.4,385.8 905.7,387.2 910.1,388.2 914.4,379.8 918.7,411.8 923.1,384.8 927.4,414.2 931.7,398.9 936.1,417.6 940.4,387.6 944.7,383.9 949.0,405.1 953.4,407.6 957.7,382.6 962.0,396.4 966.4,398.9 970.7,377.0 975.0,390.1 979.4,391.8 983.7,407.0 988.0,394.5 992.4,390.8 996.7,389.5 1001.0,391.0 1005.3,407.2 1009.7,394.8 1014.0,397.0 1018.3,394.5 1022.7,392.0 1027.0,381.0 1031.3,395.1 1035.7,389.5 1040.0,410.5 1044.3,402.6 1048.7,378.0 1053.0,411.0 1057.3,407.6 1061.7,406.8 1066.0,402.6 1070.3,395.1 1074.6,400.8 1079.0,413.9 1083.3,418.2 1087.6,397.6 1092.0,416.8 1096.3,413.2 1100.6,415.1 1105.0,394.8 1109.3,394.8 1113.6,389.5 1118.0,405.1 1122.3,417.6 1126.6,392.2 1130.9,414.8 1135.3,413.0 1139.6,398.0 1143.9,393.9 1148.3,403.9 1152.6,413.0 1156.9,386.0 1161.3,392.6 1165.6,388.9 1169.9,413.0 1174.3,400.1 1178.6,380.1 1182.9,407.2 1187.3,402.0 1191.6,397.0" fill="none" stroke="#6a8cf2" stroke-width="1.4" stroke-linejoin="round" stroke-linecap="round"/>
<text x="872.5" y="366.6" text-anchor="end" class="tick">14,000</text>
<text x="872.5" y="384.1" text-anchor="end" class="tick">12,000</text>
<text x="872.5" y="401.6" text-anchor="end" class="tick">10,000</text>
<text x="872.5" y="419.1" text-anchor="end" class="tick">8,000</text>
<text x="872.5" y="436.6" text-anchor="end" class="tick">6,000</text>
<text x="872.5" y="454.1" text-anchor="end" class="tick">4,000</text>
<text x="872.5" y="471.6" text-anchor="end" class="tick">2,000</text>
<text x="872.5" y="488.8" text-anchor="end" class="tick">0</text>
<rect x="842" y="494.4" width="7.2" height="7.2" rx="1.7" fill="#6b7bf0"/>
<text x="854" y="501.7" class="leg" style="letter-spacing:0px">ok</text>
</svg>

<!-- ============ TABLE 1 ============ -->
<div class="card" style="left:253px;top:527px;width:962px;height:277px"></div>
<div class="ct" style="left:268px;top:544px">Top 5 requested paths</div>
<div class="dots" style="left:1185.7px;top:549px"><i></i><i></i><i></i></div>
<div class="th" style="left:263px;top:572px;width:942px;height:44.5px"></div>
<div class="thl" style="left:273px;top:589px">Worker</div>
<div class="thl" style="left:623px;top:589px;letter-spacing:-.5px">URL</div>
<div class="thl" style="left:897px;top:589px">Count</div>

<div class="cbar" style="left:886px;top:616.5px;width:319px;height:36px"></div>
<div class="cbar" style="left:886px;top:652.5px;width:312px;height:36px"></div>
<div class="cbar" style="left:886px;top:688.5px;width:308.5px;height:36px"></div>
<div class="cbar" style="left:886px;top:724.5px;width:299px;height:36px"></div>
<div class="cbar" style="left:886px;top:760.5px;width:293px;height:35px"></div>

<div class="hl" style="left:263px;top:652px;width:942px"></div>
<div class="hl" style="left:263px;top:688px;width:942px"></div>
<div class="hl" style="left:263px;top:724px;width:942px"></div>
<div class="hl" style="left:263px;top:760px;width:942px"></div>
<div class="hl" style="left:263px;top:795px;width:942px"></div>
<div class="vl" style="left:612px;top:572px;height:224px"></div>
<div class="vl" style="left:885px;top:572px;height:224px"></div>

<div class="td wk" style="left:274px;top:629px">worker1</div>
<div class="td wk" style="left:274px;top:665px">worker5</div>
<div class="td wk" style="left:274px;top:701px">worker3</div>
<div class="td wk" style="left:274px;top:737px">worker4</div>
<div class="td wk" style="left:274px;top:773px">worker2</div>
<div class="td" style="left:624px;top:629px">/</div>
<div class="td" style="left:624px;top:665px">/</div>
<div class="td" style="left:624px;top:701px">/</div>
<div class="td" style="left:624px;top:737px">/</div>
<div class="td" style="left:624px;top:773px">/</div>
<div class="td num" style="left:898px;top:629px">23,455</div>
<div class="td num" style="left:898px;top:665px">22,987</div>
<div class="td num" style="left:898px;top:701px">22,756</div>
<div class="td num" style="left:898px;top:737px">22,008</div>
<div class="td num" style="left:898px;top:773px">21,569</div>

<!-- ============ TABLE 2 ============ -->
<div class="card" style="left:253px;top:814px;width:962px;height:277px"></div>
<div class="ct" style="left:268px;top:831px">Top 5 URLs causing 404</div>
<div class="dots" style="left:1185.7px;top:836px"><i></i><i></i><i></i></div>
<div class="th" style="left:263px;top:858.5px;width:942px;height:44.5px"></div>
<div class="thl" style="left:273px;top:876px;letter-spacing:-.5px">URL</div>
<div class="thl" style="left:700px;top:876px">Count</div>

<div class="cbar" style="left:688px;top:902.5px;width:517px;height:36px"></div>
<div class="cbar" style="left:688px;top:938.5px;width:248px;height:36px"></div>
<div class="cbar" style="left:688px;top:974.5px;width:111px;height:36px"></div>
<div class="cbar" style="left:688px;top:1010.5px;width:75.3px;height:36px"></div>
<div class="cbar" style="left:688px;top:1046.5px;width:28.2px;height:35.5px"></div>

<div class="hl" style="left:263px;top:938px;width:942px"></div>
<div class="hl" style="left:263px;top:974px;width:942px"></div>
<div class="hl" style="left:263px;top:1010px;width:942px"></div>
<div class="hl" style="left:263px;top:1046px;width:942px"></div>
<div class="hl" style="left:263px;top:1082px;width:942px"></div>
<div class="vl" style="left:688px;top:858px;height:224px"></div>

<div class="td" style="left:274px;top:916px">/not-found</div>
<div class="td" style="left:274px;top:952px">/hoem</div>
<div class="td" style="left:274px;top:988px">/profilev2</div>
<div class="td" style="left:274px;top:1024px">/elon-musj</div>
<div class="td" style="left:274px;top:1060px">/backdoor</div>
<div class="td num" style="left:701px;top:916px">6,798</div>
<div class="td num" style="left:701px;top:952px">3,257</div>
<div class="td num" style="left:701px;top:988px">1,457</div>
<div class="td num" style="left:701px;top:1024px">987</div>
<div class="td num" style="left:701px;top:1060px">351</div>

</div>
</body>
</html>
